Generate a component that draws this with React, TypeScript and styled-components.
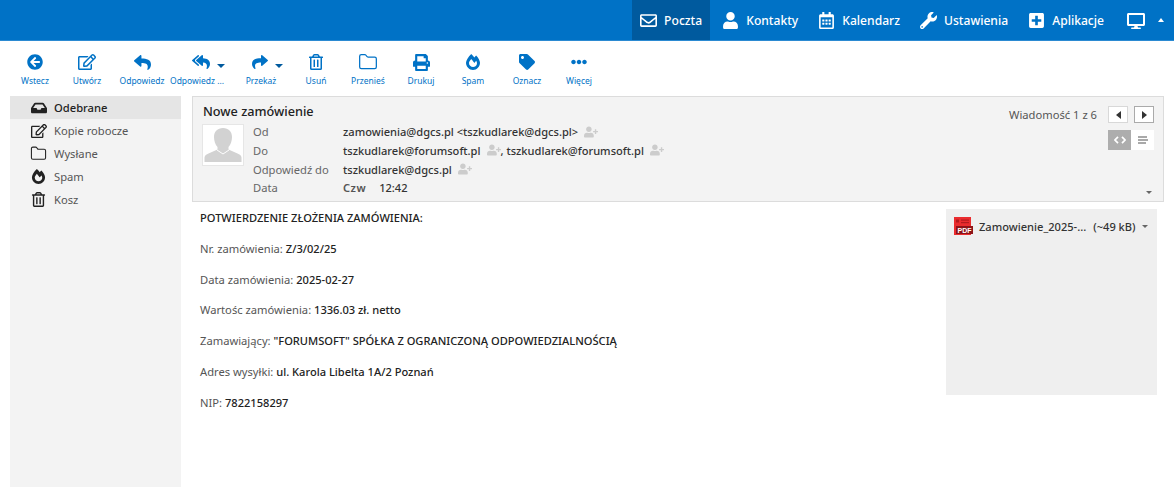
import { ReactNode } from "react";
import { createGlobalStyle, styled } from "styled-components";
import { Folder as FolderOutline } from "lucide-react";
import {
  FaArrowCircleLeft,
  FaDesktop,
  FaEllipsisH,
  FaFireAlt,
  FaInbox,
  FaPlusSquare,
  FaPrint,
  FaRegCalendarAlt,
  FaRegEdit,
  FaRegEnvelope,
  FaRegTrashAlt,
  FaReply,
  FaReplyAll,
  FaShare,
  FaTag,
  FaUser,
  FaUserPlus,
  FaWrench,
} from "react-icons/fa";

const GlobalStyle = createGlobalStyle`
  html, body {
    margin: 0;
    padding: 0;
    background: #fff;
    font-family: "Noto Sans", "Open Sans", sans-serif;
    font-size: 11.2px;
    color: #333;
  }
`;

const Page = styled.div`
  width: 1174px;
  height: 491px;
  overflow: hidden;
  display: flex;
  flex-direction: column;
`;

const TopBar = styled.header`
  height: 40px;
  background: #0072c6;
  border-bottom: 1px solid #2b8ad2;
  display: flex;
  justify-content: flex-end;
  padding-right: 10px;
`;

const NavItem = styled.a<{ $active?: boolean }>`
  display: flex;
  align-items: center;
  gap: 7px;
  padding: 0 8px;
  margin-left: 4.1px;
  color: #fff;
  font-size: 12.1px;
  font-weight: 500;
  background: ${({ $active }) => ($active ? "#005a9e" : "transparent")};
  svg {
    font-size: 17px;
  }
`;

const DeviceItem = styled.div`
  display: flex;
  align-items: flex-start;
  gap: 13px;
  color: #fff;
  padding: 12px 0 0 15px;
  svg {
    width: 18px;
    height: 18px;
  }
`;

const UpCaret = styled.span`
  margin-top: 6px;
  border-left: 3.5px solid transparent;
  border-right: 3.5px solid transparent;
  border-bottom: 4px solid #fff;
`;

const Toolbar = styled.div`
  height: 51px;
  padding-left: 9px;
  display: flex;
  background: #fff;
`;

const ToolButton = styled.div<{ $width: number; $offset?: number }>`
  width: ${({ $width }) => $width}px;
  margin-left: ${({ $offset = 0 }) => $offset}px;
  display: flex;
  flex-direction: column;
  align-items: center;
  color: #0072c6;
  font-size: 8.5px;
  line-height: 12px;
  white-space: nowrap;
`;

const ToolIcon = styled.div<{ $shift?: number }>`
  height: 34px;
  padding-top: 8px;
  box-sizing: border-box;
  display: flex;
  align-items: center;
  gap: 7px;
  margin-right: ${({ $shift = 0 }) => -$shift}px;
`;

const ToolCaret = styled.span`
  margin-top: 7px;
  border-left: 4px solid transparent;
  border-right: 4px solid transparent;
  border-top: 4px solid #005a9e;
`;

const Content = styled.div`
  flex: 1;
  display: flex;
  padding: 4px 10px 4px;
  gap: 11px;
`;

const Sidebar = styled.nav`
  width: 171px;
  flex: none;
  background: #f3f3f3;
`;

const Folder = styled.div<{ $active?: boolean }>`
  height: 23px;
  padding-left: 20px;
  box-sizing: border-box;
  display: flex;
  align-items: center;
  gap: 7px;
  color: ${({ $active }) => ($active ? "#222" : "#555")};
  font-weight: ${({ $active }) => ($active ? 500 : 400)};
  background: ${({ $active }) => ($active ? "#e5e5e5" : "transparent")};
`;

const FolderIcon = styled.span`
  width: 17px;
  display: flex;
  justify-content: center;
  color: #222;
`;

const Main = styled.main`
  flex: 1;
  min-width: 0;
`;

const MessageHeader = styled.section`
  height: 106px;
  box-sizing: border-box;
  position: relative;
  background: #f3f3f3;
  border: 1px solid #dcdcdc;
  padding: 5px 9px 0 9px;
  display: flex;
  justify-content: space-between;
`;

const Subject = styled.h2`
  margin: 0 0 1px 1px;
  font-size: 12.7px;
  line-height: 19px;
  font-weight: 500;
  color: #222;
`;

const HeaderBody = styled.div`
  display: flex;
  gap: 9px;
`;

const Avatar = styled.div`
  width: 42px;
  height: 42px;
  margin-top: 2px;
  box-sizing: border-box;
  background: #fff;
  border: 1px solid #e6e6e6;
  svg {
    display: block;
    width: 100%;
    height: 100%;
  }
`;

const Rows = styled.div`
  display: grid;
  grid-template-columns: 90px auto;
  grid-auto-rows: 18.8px;
  align-items: center;
  padding-top: 0.2px;
`;

const Label = styled.div`
  color: #666;
`;

const Value = styled.div`
  display: flex;
  align-items: center;
  color: #333;
  font-size: 11.1px;
  font-weight: 500;
  white-space: nowrap;
`;

const AddContact = styled(FaUserPlus)`
  color: #ccc;
  font-size: 14px;
  margin-left: 6px;
`;

const Weekday = styled.b`
  font-weight: 600;
  letter-spacing: 0.5px;
  color: #555;
  margin-right: 13px;
`;

const Pager = styled.div`
  display: flex;
  flex-direction: column;
  align-items: flex-end;
  gap: 7px;
`;

const PagerTop = styled.div`
  display: flex;
  align-items: flex-start;
  gap: 6px;
`;

const PagerText = styled.span`
  color: #555;
  margin: 5px 5px 0 0;
`;

const PagerButton = styled.button<{ $focused?: boolean }>`
  width: 20px;
  height: 17px;
  padding: 0;
  margin-top: 4px;
  background: #fff;
  border: 1px solid ${({ $focused }) => ($focused ? "#aaa" : "#d8d8d8")};
  display: flex;
  align-items: center;
  justify-content: center;
`;

const Triangle = styled.span<{ $dir: "left" | "right" }>`
  border-top: 4px solid transparent;
  border-bottom: 4px solid transparent;
  ${({ $dir }) =>
    $dir === "left"
      ? "border-right: 5px solid #333;"
      : "border-left: 5px solid #333;"}
`;

const Toggle = styled.div`
  display: flex;
  width: 46px;
  height: 20px;
`;

const ToggleOption = styled.div<{ $on?: boolean }>`
  flex: 1;
  background: ${({ $on }) => ($on ? "#adadad" : "#fff")};
  display: flex;
  align-items: center;
  justify-content: center;
`;

const ExpandCaret = styled.span`
  position: absolute;
  right: 11px;
  bottom: 7px;
  border-left: 3.5px solid transparent;
  border-right: 3.5px solid transparent;
  border-top: 3.5px solid #666;
`;

const MessageBody = styled.div`
  display: flex;
  justify-content: space-between;
  padding: 7px 7px 0 8px;
`;

const BodyText = styled.div`
  padding-top: 1px;
  color: #555;
  line-height: 15.4px;
`;

const BodyLine = styled.p`
  margin: 0 0 15.4px;
  b {
    font-size: 11.1px;
    font-weight: 500;
    color: #222;
  }
`;

const Attachments = styled.aside`
  width: 211px;
  height: 186px;
  background: #efefef;
  padding: 8px 8px 0;
  box-sizing: border-box;
`;

const AttachmentRow = styled.div`
  display: flex;
  align-items: center;
  color: #333;
  font-size: 11.1px;
  font-weight: 500;
  white-space: nowrap;
  svg {
    flex: none;
  }
`;

const AttachmentName = styled.span`
  margin-left: 6px;
`;

const AttachmentSize = styled.span`
  margin-left: 7px;
`;

const AttachmentCaret = styled.span`
  margin-left: 6px;
  border-left: 3.5px solid transparent;
  border-right: 3.5px solid transparent;
  border-top: 3.5px solid #666;
`;

const PdfIcon = () => (
  <svg width="19" height="19" viewBox="0 0 19 19">
    <rect width="17" height="18" fill="#ea2c2e" />
    <rect x="2" y="2.5" width="3" height="3" fill="#b31b1e" />
    <rect x="7" y="2.5" width="8" height="1.2" fill="#b31b1e" />
    <rect x="7" y="5" width="8" height="1.2" fill="#b31b1e" />
    <rect x="2" y="9" width="17" height="8" fill="#8e1418" />
    <text
      x="10.5"
      y="15.5"
      textAnchor="middle"
      fontSize="7"
      fontWeight="700"
      fill="#fff"
      fontFamily="Liberation Sans, sans-serif"
    >
      PDF
    </text>
  </svg>
);

const AvatarIcon = () => (
  <svg viewBox="0 0 40 40">
    <path
      d="M20 3c5.5 0 9 3.5 9 9 0 3.5-1.2 7.5-3.5 10v2.5l9 4c2 .9 4 2 4 4V37H1.5v-4.5c0-2 2-3.1 4-4l9-4V22c-2.3-2.5-3.5-6.5-3.5-10 0-5.5 3.5-9 9-9z"
      fill="#d2d2d2"
    />
    <path d="M14 25l6 4 6-4" fill="none" stroke="#fff" strokeWidth="1" />
  </svg>
);

const CodeIcon = () => (
  <svg width="12" height="8" viewBox="0 0 12 8">
    <path d="M4 .8L1 4l3 3.2M8 .8L11 4 8 7.2" fill="none" stroke="#fff" strokeWidth="1.7" />
  </svg>
);

const LinesIcon = () => (
  <svg width="10" height="8" viewBox="0 0 10 8">
    <path d="M0 1h9M0 4h10M0 7h8" stroke="#555" strokeWidth="1.2" />
  </svg>
);

const navItems: { label: string; icon: ReactNode; active?: boolean }[] = [
  { label: "Poczta", icon: <FaRegEnvelope />, active: true },
  { label: "Kontakty", icon: <FaUser /> },
  { label: "Kalendarz", icon: <FaRegCalendarAlt /> },
  { label: "Ustawienia", icon: <FaWrench /> },
  { label: "Aplikacje", icon: <FaPlusSquare /> },
];

const tools: {
  label: string;
  icon: ReactNode;
  width: number;
  offset?: number;
  caret?: boolean;
  shift?: number;
}[] = [
  { label: "Wstecz", icon: <FaArrowCircleLeft size={16} />, width: 52 },
  { label: "Utwórz", icon: <FaRegEdit size={18} />, width: 52 },
  { label: "Odpowiedz", icon: <FaReply size={17} />, width: 58 },
  { label: "Odpowiedz ...", icon: <FaReplyAll size={18} />, width: 52, caret: true, shift: 23 },
  { label: "Przekaż", icon: <FaShare size={16} />, width: 52, offset: 12, caret: true, shift: 13 },
  { label: "Usuń", icon: <FaRegTrashAlt size={16} />, width: 52, offset: 3 },
  { label: "Przenieś", icon: <FolderOutline size={20} strokeWidth={1.5} />, width: 52 },
  { label: "Drukuj", icon: <FaPrint size={17} />, width: 52, offset: 1 },
  { label: "Spam", icon: <FaFireAlt size={16} />, width: 52 },
  { label: "Oznacz", icon: <FaTag size={16} />, width: 52, offset: 2 },
  { label: "Więcej", icon: <FaEllipsisH size={16} />, width: 52 },
];

const folders: { label: string; icon: ReactNode; active?: boolean }[] = [
  { label: "Odebrane", icon: <FaInbox size={16} />, active: true },
  { label: "Kopie robocze", icon: <FaRegEdit size={16} /> },
  { label: "Wysłane", icon: <FolderOutline size={17} strokeWidth={1.5} /> },
  { label: "Spam", icon: <FaFireAlt size={15} /> },
  { label: "Kosz", icon: <FaRegTrashAlt size={15} /> },
];

export default function App() {
  return (
    <Page>
      <GlobalStyle />
      <TopBar>
        {navItems.map(item => (
          <NavItem key={item.label} $active={item.active}>
            {item.icon}
            {item.label}
          </NavItem>
        ))}
        <DeviceItem>
          <FaDesktop />
          <UpCaret />
        </DeviceItem>
      </TopBar>

      <Toolbar>
        {tools.map(tool => (
          <ToolButton key={tool.label} $width={tool.width} $offset={tool.offset}>
            <ToolIcon $shift={tool.shift}>
              {tool.icon}
              {tool.caret && <ToolCaret />}
            </ToolIcon>
            {tool.label}
          </ToolButton>
        ))}
      </Toolbar>

      <Content>
        <Sidebar>
          {folders.map(folder => (
            <Folder key={folder.label} $active={folder.active}>
              <FolderIcon>{folder.icon}</FolderIcon>
              {folder.label}
            </Folder>
          ))}
        </Sidebar>

        <Main>
          <MessageHeader>
            <div>
              <Subject>Nowe zamówienie</Subject>
              <HeaderBody>
                <Avatar>
                  <AvatarIcon />
                </Avatar>
                <Rows>
                  <Label>Od</Label>
                  <Value>
                    zamowienia@dgcs.pl &lt;tszkudlarek@dgcs.pl&gt;
                    <AddContact />
                  </Value>
                  <Label>Do</Label>
                  <Value>
                    tszkudlarek@forumsoft.pl
                    <AddContact />, tszkudlarek@forumsoft.pl
                    <AddContact />
                  </Value>
                  <Label>Odpowiedź do</Label>
                  <Value>
                    tszkudlarek@dgcs.pl
                    <AddContact />
                  </Value>
                  <Label>Data</Label>
                  <Value>
                    <Weekday>Czw</Weekday>12:42
                  </Value>
                </Rows>
              </HeaderBody>
            </div>
            <Pager>
              <PagerTop>
                <PagerText>Wiadomość 1 z 6</PagerText>
                <PagerButton>
                  <Triangle $dir="left" />
                </PagerButton>
                <PagerButton $focused>
                  <Triangle $dir="right" />
                </PagerButton>
              </PagerTop>
              <Toggle>
                <ToggleOption $on>
                  <CodeIcon />
                </ToggleOption>
                <ToggleOption>
                  <LinesIcon />
                </ToggleOption>
              </Toggle>
            </Pager>
            <ExpandCaret />
          </MessageHeader>

          <MessageBody>
            <BodyText>
              <BodyLine>
                <b>POTWIERDZENIE ZŁOŻENIA ZAMÓWIENIA:</b>
              </BodyLine>
              <BodyLine>
                Nr. zamówienia: <b>Z/3/02/25</b>
              </BodyLine>
              <BodyLine>
                Data zamówienia: <b>2025-02-27</b>
              </BodyLine>
              <BodyLine>
                Wartośc zamówienia: <b>1336.03 zł. netto</b>
              </BodyLine>
              <BodyLine>
                Zamawiający: <b>"FORUMSOFT" SPÓŁKA Z OGRANICZONĄ ODPOWIEDZIALNOŚCIĄ</b>
              </BodyLine>
              <BodyLine>
                Adres wysyłki: <b>ul. Karola Libelta 1A/2 Poznań</b>
              </BodyLine>
              <BodyLine>
                NIP: <b>7822158297</b>
              </BodyLine>
            </BodyText>
            <Attachments>
              <AttachmentRow>
                <PdfIcon />
                <AttachmentName>Zamowienie_2025-...</AttachmentName>
                <AttachmentSize>(~49 kB)</AttachmentSize>
                <AttachmentCaret />
              </AttachmentRow>
            </Attachments>
          </MessageBody>
        </Main>
      </Content>
    </Page>
  );
}
